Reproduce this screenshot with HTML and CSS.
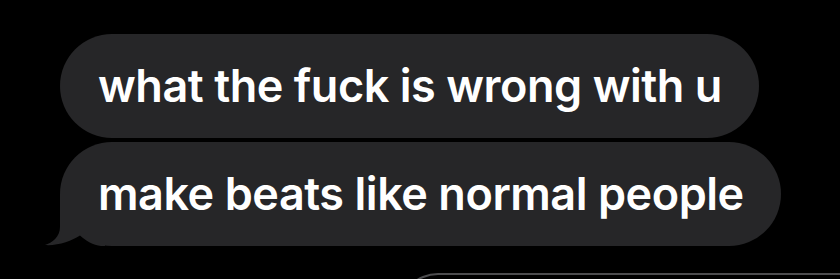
FILE: index.html
```html
<!DOCTYPE html>
<html>
<head>
<meta charset="utf-8">
<link rel="stylesheet" href="styles.css">
</head>
<body>
<div class="thread">
  <div class="bubble"><span class="text">what the fuck is wrong with u</span></div>
  <div class="bubble last">
    <svg class="tail" width="60" height="67" viewBox="0 0 60 67"><path d="M15 15 L15 48 C15 58 7 64 0 66 C12 67 27 62 35 56.5 C41 62 48 66 56 67 L60 67 L60 15 Z" fill="#262628"/></svg>
    <span class="text">make beats like normal people</span>
  </div>
</div>
<div class="composer"></div>
</body>
</html>
```
FILE: styles.css
```css
html, body {
  margin: 0;
  padding: 0;
  background: #000;
  height: 279px;
  overflow: hidden;
}
.thread {
  display: flex;
  flex-direction: column;
  align-items: flex-start;
  gap: 4px;
  padding: 34px 0 0 60px;
}
.bubble {
  position: relative;
  background: #262628;
  color: #fff;
  font-family: Inter, "Noto Sans", sans-serif;
  font-weight: 600;
  font-size: 45px;
  line-height: 104px;
  height: 104px;
  padding: 0 37px 0 38px;
  border-radius: 52px;
  letter-spacing: -0.45px;
  white-space: nowrap;
}
.text {
  position: relative;
}
.tail {
  position: absolute;
  left: -15px;
  bottom: 0;
}
.composer {
  margin: 27px 0 0 398px;
  height: 80px;
  border: 2px solid #4d4d4f;
  border-right: none;
  border-radius: 40px 0 0 0;
}
```
